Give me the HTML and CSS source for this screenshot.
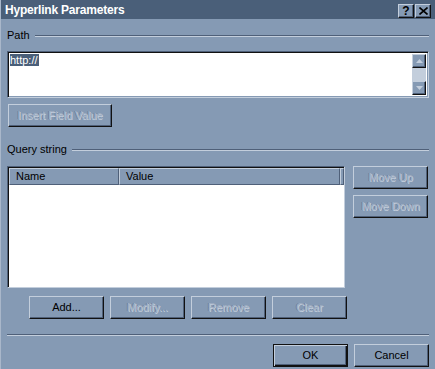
FILE: index.html
```html
<!DOCTYPE html>
<html>
<head>
<meta charset="utf-8">
<link rel="stylesheet" href="styles.css">
</head>
<body>
<div class="window">
  <div class="titlebar">
    <span class="title">Hyperlink Parameters</span>
    <div class="tbtns">
      <span class="tbtn">?</span>
      <span class="tbtn close">
        <svg width="9" height="8" viewBox="0 0 9 8"><path d="M0.5 0.5 L8.5 7.5 M8.5 0.5 L0.5 7.5" stroke="#000" stroke-width="1.6"/></svg>
      </span>
    </div>
  </div>
  <div class="content">
    <div class="group-head path-head"><span>Path</span><span class="gline"></span></div>
    <div class="textbox">
      <div class="text-area"><span class="sel">http://</span></div>
      <div class="vscroll">
        <span class="sbtn"><svg width="7" height="4" viewBox="0 0 7 4"><path d="M3.5 0 L7 4 L0 4 Z" fill="#c3cedc"/></svg></span>
        <span class="strack"></span>
        <span class="sbtn"><svg width="7" height="4" viewBox="0 0 7 4"><path d="M0 0 L7 0 L3.5 4 Z" fill="#c3cedc"/></svg></span>
      </div>
    </div>
    <div class="btn disabled insert">Insert Field Value</div>
    <div class="group-head query-head"><span>Query string</span><span class="gline"></span></div>
    <div class="list-row">
      <div class="listview">
        <div class="lv-head">
          <span class="hcell c-name">Name</span>
          <span class="hcell c-value">Value</span>
          <span class="hcell c-fill"></span>
        </div>
        <div class="lv-body"></div>
      </div>
      <div class="side-btns">
        <div class="btn disabled">Move Up</div>
        <div class="btn disabled">Move Down</div>
      </div>
    </div>
    <div class="action-row">
      <div class="btn">Add...</div>
      <div class="btn disabled">Modify...</div>
      <div class="btn disabled">Remove</div>
      <div class="btn disabled">Clear</div>
    </div>
    <div class="separator"></div>
    <div class="dialog-row">
      <div class="btn default">OK</div>
      <div class="btn">Cancel</div>
    </div>
  </div>
</div>
</body>
</html>
```

FILE: styles.css
```css
html, body {
  margin: 0;
  padding: 0;
}
body {
  width: 435px;
  height: 369px;
  overflow: hidden;
  background: #859ab4;
  font-family: "Liberation Sans", Arial, sans-serif;
  font-size: 11px;
  color: #000;
}
.window {
  width: 435px;
  height: 369px;
  box-sizing: border-box;
  border-left: 1px solid #a9b7ca;
  display: flex;
  flex-direction: column;
}
.titlebar {
  height: 19px;
  background: #4a5f79;
  display: flex;
  align-items: center;
  justify-content: space-between;
  padding-left: 4px;
  padding-right: 4px;
  flex: none;
}
.title {
  color: #fff;
  font-weight: bold;
  font-size: 12px;
  letter-spacing: -0.2px;
}
.tbtns {
  display: flex;
  gap: 1px;
  margin-top: 2px;
}
.tbtn {
  width: 16px;
  height: 14px;
  box-sizing: border-box;
  background: #859ab4;
  border-top: 1px solid #c3cedc;
  border-left: 1px solid #c3cedc;
  border-right: 1px solid #111;
  border-bottom: 1px solid #111;
  box-shadow: inset -1px -1px 0 #4f6079;
  display: flex;
  align-items: center;
  justify-content: center;
  font-weight: bold;
  font-size: 12px;
  line-height: 12px;
  color: #000;
}
.content {
  padding: 0 6px 0 6px;
  display: flex;
  flex-direction: column;
}
.group-head {
  display: flex;
  align-items: center;
  height: 13px;
  line-height: 13px;
}
.gline {
  flex: 1;
  height: 0;
  border-top: 1px solid #4f6079;
  border-bottom: 1px solid #c3cedc;
  margin-left: 5px;
}
.path-head {
  margin-top: 10px;
}
.textbox {
  margin-top: 9px;
  height: 47px;
  box-sizing: border-box;
  background: #fff;
  border-top: 1px solid #4f6079;
  border-left: 1px solid #4f6079;
  border-right: 1px solid #c3cedc;
  border-bottom: 1px solid #c3cedc;
  box-shadow: inset 1px 1px 0 #111, inset -1px -1px 0 #859ab4;
  display: flex;
  padding: 2px 2px 2px 2px;
}
.text-area {
  flex: 1;
  line-height: 12px;
}
.sel {
  background: #4a5f79;
  color: #fff;
  padding: 0 1px 0 0;
}
.vscroll {
  width: 14px;
  display: flex;
  flex-direction: column;
  background: #c3cedc;
}
.sbtn {
  height: 14px;
  box-sizing: border-box;
  background: #859ab4;
  border-top: 1px solid #c3cedc;
  border-left: 1px solid #c3cedc;
  border-right: 1px solid #111;
  border-bottom: 1px solid #111;
  box-shadow: inset -1px -1px 0 #4f6079;
  display: flex;
  align-items: center;
  justify-content: center;
}
.strack {
  flex: 1;
}
.btn {
  width: 75px;
  height: 23px;
  box-sizing: border-box;
  background: #859ab4;
  border-top: 1px solid #c3cedc;
  border-left: 1px solid #c3cedc;
  border-right: 1px solid #111;
  border-bottom: 1px solid #111;
  box-shadow: inset -1px -1px 0 #4f6079;
  display: flex;
  align-items: center;
  justify-content: center;
  color: #000;
  padding-bottom: 1px;
}
.btn.disabled {
  color: #a3b2c6;
  text-shadow: 1px 1px 0 #c3cedc, -1px 0 0 #6d819c;
}
.btn.default {
  border: 1px solid #111;
  box-shadow: inset 1px 1px 0 #c3cedc, inset -1px -1px 0 #111, inset -2px -2px 0 #4f6079;
}
.insert {
  width: 104px;
  margin-top: 6px;
  margin-left: 1px;
}
.query-head {
  margin-top: 16px;
}
.list-row {
  margin-top: 10px;
  display: flex;
  gap: 8px;
}
.listview {
  width: 338px;
  height: 122px;
  box-sizing: border-box;
  background: #fff;
  border-top: 1px solid #4f6079;
  border-left: 1px solid #4f6079;
  border-right: 1px solid #c3cedc;
  border-bottom: 1px solid #c3cedc;
  box-shadow: inset 1px 1px 0 #111;
  padding: 1px 0 0 1px;
  display: flex;
  flex-direction: column;
}
.lv-head {
  display: flex;
  height: 17px;
}
.hcell {
  box-sizing: border-box;
  height: 17px;
  background: #859ab4;
  border-top: 1px solid #c3cedc;
  border-left: 1px solid #c3cedc;
  border-right: 1px solid #4f6079;
  border-bottom: 1px solid #4f6079;
  padding-left: 6px;
  line-height: 15px;
}
.c-name {
  width: 110px;
}
.c-value {
  width: 221px;
}
.c-fill {
  flex: 1;
  padding: 0;
}
.lv-body {
  flex: 1;
}
.side-btns {
  display: flex;
  flex-direction: column;
  gap: 6px;
}
.action-row {
  margin-top: 8px;
  margin-left: 22px;
  display: flex;
  gap: 6px;
}
.separator {
  margin-top: 15px;
  height: 0;
  border-top: 1px solid #4f6079;
  border-bottom: 1px solid #c3cedc;
}
.dialog-row {
  margin-top: 8px;
  display: flex;
  justify-content: flex-end;
  gap: 6px;
}
```
